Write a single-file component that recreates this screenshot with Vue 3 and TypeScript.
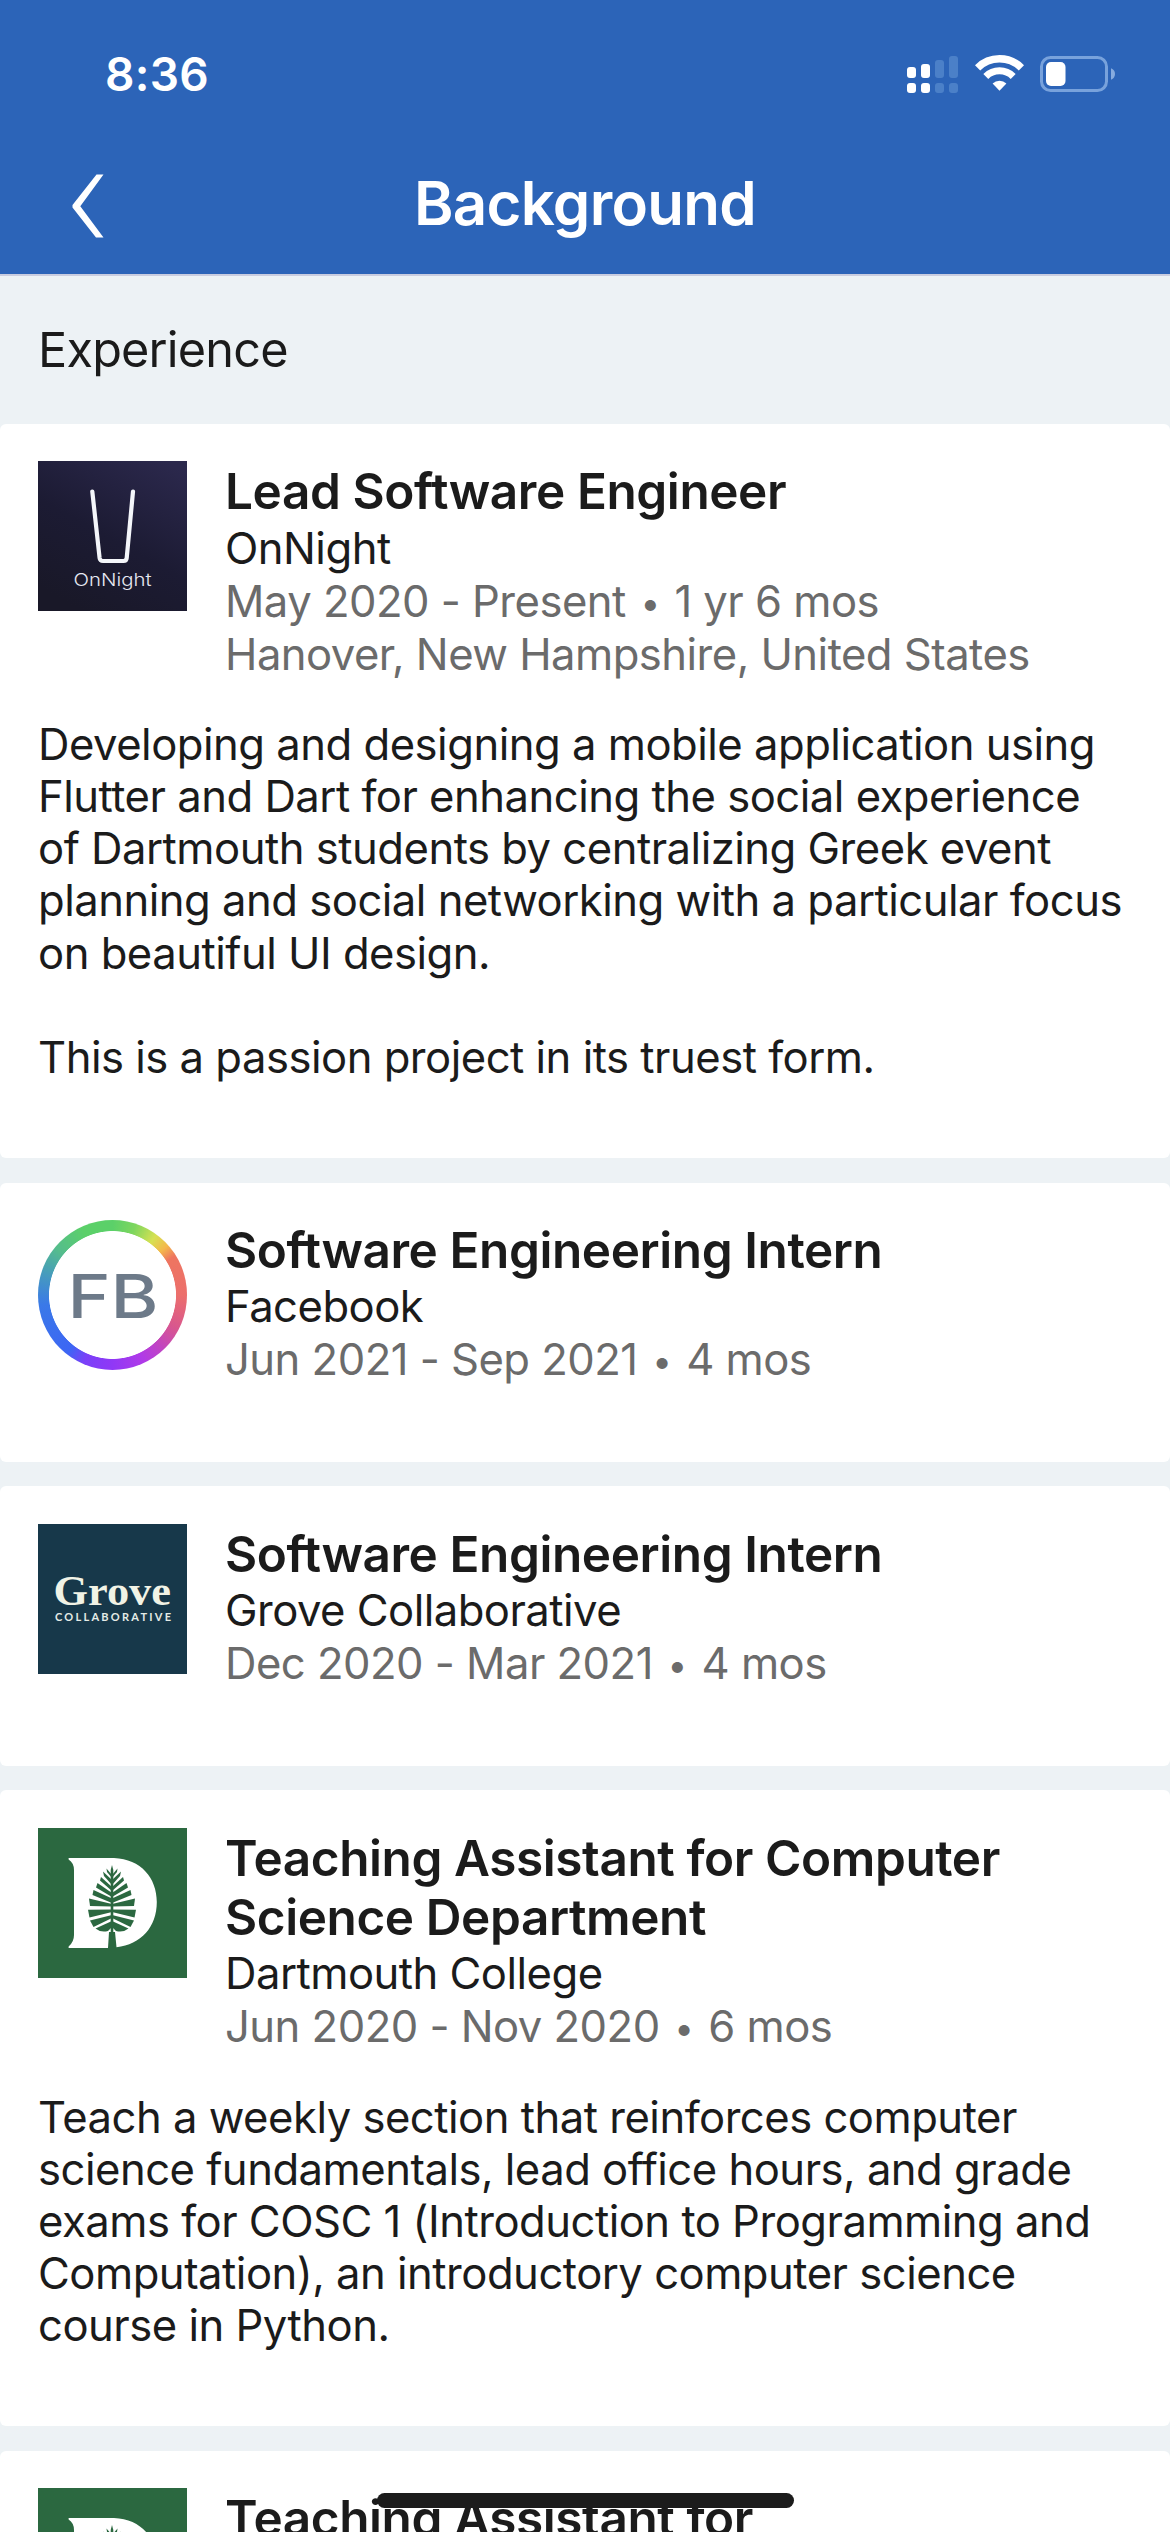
<script setup lang="ts">
type LogoKind = 'onnight' | 'facebook' | 'grove' | 'dartmouth'

interface Position {
  id: number
  logo: LogoKind
  title: string[]
  company: string
  dates: string
  duration: string
  location?: string
  description?: string[]
}

const positions: Position[] = [
  {
    id: 1,
    logo: 'onnight',
    title: ['Lead Software Engineer'],
    company: 'OnNight',
    dates: 'May 2020 - Present',
    duration: '1 yr 6 mos',
    location: 'Hanover, New Hampshire, United States',
    description: [
      'Developing and designing a mobile application using',
      'Flutter and Dart for enhancing the social experience',
      'of Dartmouth students by centralizing Greek event',
      'planning and social networking with a particular focus',
      'on beautiful UI design.',
      '',
      'This is a passion project in its truest form.',
    ],
  },
  {
    id: 2,
    logo: 'facebook',
    title: ['Software Engineering Intern'],
    company: 'Facebook',
    dates: 'Jun 2021 - Sep 2021',
    duration: '4 mos',
  },
  {
    id: 3,
    logo: 'grove',
    title: ['Software Engineering Intern'],
    company: 'Grove Collaborative',
    dates: 'Dec 2020 - Mar 2021',
    duration: '4 mos',
  },
  {
    id: 4,
    logo: 'dartmouth',
    title: ['Teaching Assistant for Computer', 'Science Department'],
    company: 'Dartmouth College',
    dates: 'Jun 2020 - Nov 2020',
    duration: '6 mos',
    description: [
      'Teach a weekly section that reinforces computer',
      'science fundamentals, lead office hours, and grade',
      'exams for COSC 1 (Introduction to Programming and',
      'Computation), an introductory computer science',
      'course in Python.',
    ],
  },
  {
    id: 5,
    logo: 'dartmouth',
    title: ['Teaching Assistant for'],
    company: '',
    dates: '',
    duration: '',
  },
]

// One side of the pine; the other side is mirrored around the trunk.
const branches: string[] = [
  'M74 47 L68.5 40.5 L69 44 L74 50 Z',
  'M74 52 L65 43.5 L66 48 L74 57 Z',
  'M74 59 L63 49 L62 52.5 L74 63 Z',
  'M74 65 L59.5 55 L58 59.5 L74 69 Z',
  'M74 70.5 L55.5 62 L54.5 67 L74 75 Z',
  'M74 76 L51 70.5 L52 78 L74 78.5 Z',
  'M74 81.5 L50 81.8 L51.5 89.5 L74 84 Z',
  'M74 87 L52 92.5 L55.5 99 L74 90 Z',
  'M74 93 L57.5 100.5 Q63 105 70 103 L74 99 Z',
]
</script>

<template>
  <div class="screen">
    <header class="top">
      <div class="status">
        <span class="time">8:36</span>
        <div class="indicators">
          <svg class="signal" viewBox="0 0 51 37" width="51" height="37">
            <g fill="#fff">
              <rect x="0" y="11" width="9" height="11" rx="3" />
              <rect x="14" y="8" width="9" height="14" rx="3" />
              <rect x="0" y="27" width="9" height="10" rx="3" />
              <rect x="14" y="27" width="9" height="10" rx="3" />
            </g>
            <g fill="#4b80c8">
              <rect x="28" y="4" width="9" height="18" rx="3" />
              <rect x="42" y="0" width="9" height="22" rx="3" />
              <rect x="28" y="27" width="9" height="10" rx="3" />
              <rect x="42" y="27" width="9" height="10" rx="3" />
            </g>
          </svg>
          <svg class="wifi" viewBox="0 0 49 36" width="49" height="36">
            <g fill="none" stroke="#fff">
              <path d="M2.6 12.8 A31 31 0 0 1 46.4 12.8" stroke-width="7.4" />
              <path d="M10.8 21.4 A19.4 19.4 0 0 1 38.2 21.4" stroke-width="7" />
            </g>
            <path d="M17.6 28.6 A10 10 0 0 1 31.4 28.6 L24.5 35.8 Z" fill="#fff" />
          </svg>
          <svg class="battery" viewBox="0 0 76 36" width="76" height="36">
            <rect x="1.5" y="1.5" width="65" height="33" rx="9" fill="none" stroke="#78a2dc" stroke-width="3" />
            <rect x="6" y="6" width="19.5" height="24" rx="5" fill="#fff" />
            <path d="M71 12.3 Q75 14 75 18 Q75 22 71 23.7 Z" fill="#86abdf" />
          </svg>
        </div>
      </div>
      <nav class="bar">
        <svg class="back" viewBox="0 0 32 64" width="32" height="64">
          <path d="M31.5 .5 H24.5 L.5 31 V33.5 L24 63.5 H31.5 L8.3 32.2 Z" fill="#fff" />
        </svg>
        <h1>Background</h1>
      </nav>
    </header>

    <h2 class="section">Experience</h2>

    <main class="list">
      <article v-for="p in positions" :key="p.id" class="card">
        <div class="summary">
          <svg v-if="p.logo === 'onnight'" class="logo" viewBox="0 0 149 150">
            <defs>
              <linearGradient id="night" x1="0.85" y1="0" x2="0.3" y2="1">
                <stop offset="0" stop-color="#2b284c" />
                <stop offset="0.55" stop-color="#1c1b33" />
                <stop offset="1" stop-color="#191828" />
              </linearGradient>
            </defs>
            <rect width="149" height="150" fill="url(#night)" />
            <path
              d="M54.3 30.5 L61.6 97 Q62 100 65 100 H85.5 Q88.4 100 88.7 97 L95 30.5"
              fill="none" stroke="#f4f6fa" stroke-width="4.2" stroke-linecap="round"
            />
            <text class="mark-night" x="35.5" y="125" textLength="78" lengthAdjust="spacingAndGlyphs">OnNight</text>
          </svg>

          <div v-else-if="p.logo === 'facebook'" class="logo ring">
            <svg viewBox="0 0 149 150">
              <text class="mark-fb" x="29.5" y="97.7" textLength="91" lengthAdjust="spacingAndGlyphs">FB</text>
            </svg>
          </div>

          <svg v-else-if="p.logo === 'grove'" class="logo" viewBox="0 0 149 150">
            <rect width="149" height="150" fill="#17384a" />
            <text class="mark-grove" x="15.5" y="81" textLength="117.5" lengthAdjust="spacingAndGlyphs">Grove</text>
            <text class="mark-collab" x="17" y="97.3" textLength="116">COLLABORATIVE</text>
          </svg>

          <svg v-else class="logo" viewBox="0 0 149 150">
            <rect width="149" height="150" fill="#2b6840" />
            <path
              d="M30.6 30 H76 C103 31 118.8 50 118.8 74 C118.8 99 103 116.5 78.5 119.2 L77 104 H71 L70 120 H30.6 V118.5 Q36 114 36 107 V42 Q36 35 30.6 31.5 Z"
              fill="#fff"
            />
            <g fill="#2b6840">
              <path d="M74 37 L75.3 42 V104 H72.7 V42 Z" />
              <path v-for="(b, i) in branches" :key="i" :d="b" />
              <g transform="translate(148 0) scale(-1 1)">
                <path v-for="(b, i) in branches" :key="i" :d="b" />
              </g>
            </g>
          </svg>

          <div class="details">
            <h3><span v-for="line in p.title" :key="line">{{ line }}</span></h3>
            <p v-if="p.company" class="company">{{ p.company }}</p>
            <p v-if="p.dates" class="meta">{{ p.dates }} <span class="dot">•</span> {{ p.duration }}</p>
            <p v-if="p.location" class="meta">{{ p.location }}</p>
          </div>
        </div>
        <div v-if="p.description" class="description">
          <span v-for="(line, i) in p.description" :key="i">{{ line }}</span>
        </div>
      </article>
    </main>

    <div class="home-indicator"></div>
  </div>
</template>

<style>
body {
  margin: 0;
  background: #edf2f5;
}
</style>

<style scoped>
.screen {
  position: relative;
  width: 1170px;
  height: 2532px;
  overflow: hidden;
  background: #edf2f5;
  color: #1b1b1b;
  font-family: Inter, "Liberation Sans", sans-serif;
}

h1,
h2,
h3,
p {
  margin: 0;
}

.top {
  height: 274px;
  background: #2c64b8;
  border-bottom: 2px solid #c9cde0;
  color: #fff;
}

.status {
  display: flex;
  justify-content: space-between;
  height: 150px;
  padding: 0 54px 0 105px;
}

.time {
  margin-top: 46px;
  font-size: 46px;
  line-height: 56px;
  font-weight: 600;
  letter-spacing: 0.3px;
}

.indicators {
  display: flex;
  align-items: flex-start;
  padding-top: 55px;
}

.signal {
  margin-top: 1px;
}

.wifi {
  margin-left: 17px;
}

.battery {
  margin: 1px 0 0 16px;
}

.bar {
  display: grid;
  grid-template-columns: 104px 1fr 104px;
  align-items: start;
}

.back {
  margin: 24px 0 0 72px;
}

h1 {
  margin-top: 16px;
  font-size: 60px;
  line-height: 74px;
  font-weight: 600;
  letter-spacing: -0.7px;
  text-align: center;
}

.section {
  box-sizing: border-box;
  height: 148px;
  padding: 43px 38px 0;
  font-size: 48.6px;
  line-height: 62px;
  font-weight: 400;
  letter-spacing: -0.8px;
}

.list {
  display: flex;
  flex-direction: column;
  gap: 24.8px;
}

.card {
  padding: 37.2px 0 75.5px 38px;
  border-radius: 6px;
  background: #fff;
}

.summary {
  display: flex;
  align-items: flex-start;
  gap: 38px;
}

.logo {
  flex: none;
  display: block;
  width: 149px;
  height: 150px;
}

.ring {
  border-radius: 50%;
  background:
    radial-gradient(closest-side, #fff 84.7%, transparent 85.7%),
    conic-gradient(
      #5bd069 0deg, #7dd65e 18deg, #d6e153 36deg, #f4b84c 48deg, #ee7560 58deg,
      #ec6f6c 90deg, #d8568f 118deg, #c044c4 138deg, #b03ae8 155deg, #9038f6 180deg,
      #7a40f8 203deg, #3d66f4 218deg, #3a79e8 262deg, #469cbc 288deg, #55bd8c 310deg,
      #5bd069 336deg, #5bd069 360deg
    );
}

.ring svg {
  display: block;
}

.mark-night {
  fill: #e6e8f2;
  font-size: 17.5px;
  font-weight: 300;
}

.mark-fb {
  fill: #6d7a89;
  font-size: 60px;
  font-weight: 500;
}

.mark-grove {
  fill: #f1f3e6;
  font-family: "Liberation Serif", serif;
  font-size: 42px;
  font-weight: 700;
}

.mark-collab {
  fill: #e4ebe6;
  font-family: Lato, sans-serif;
  font-size: 11px;
  font-weight: 700;
}

.details {
  padding-top: 1px;
  white-space: nowrap;
}

h3 span,
.description span {
  display: block;
}

h3 {
  font-size: 49.5px;
  line-height: 59.4px;
  font-weight: 600;
  letter-spacing: -0.42px;
}

.company,
.meta {
  font-size: 43.6px;
  line-height: 53px;
  letter-spacing: -0.52px;
}

.meta {
  color: #6b6b6b;
}

.dot {
  margin: 0 3px;
  font-size: 35px;
  line-height: 0;
  vertical-align: 1px;
}

.description {
  margin: 38.6px 0 -1.6px;
  font-size: 43.6px;
  line-height: 52.1px;
  letter-spacing: -0.5px;
  white-space: nowrap;
}

.description span {
  min-height: 52.1px;
}

.home-indicator {
  position: absolute;
  left: 377px;
  top: 2493px;
  width: 417px;
  height: 15px;
  border-radius: 8px;
  background: #1c1c1c;
}
</style>
